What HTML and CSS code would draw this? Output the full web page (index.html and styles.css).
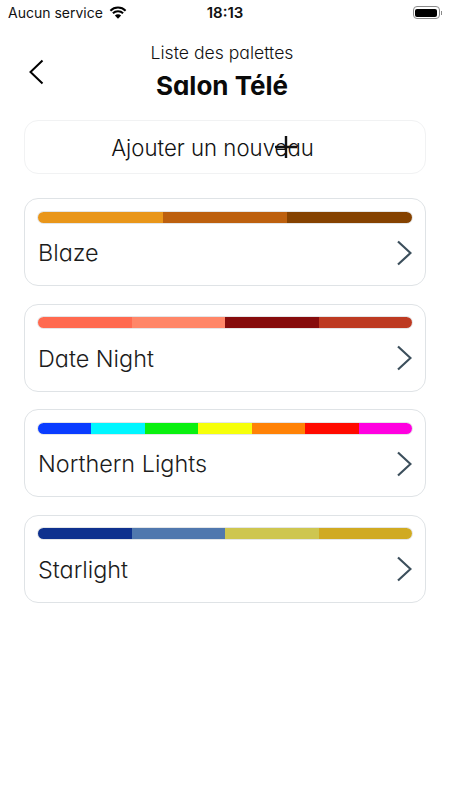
FILE: index.html
```html
<!DOCTYPE html>
<html lang="fr">
<head>
<meta charset="utf-8">
<title>Salon Télé</title>
<link rel="stylesheet" href="styles.css">
</head>
<body>
<div class="status">
  <div class="status-left">
    <span>Aucun service</span>
    <svg class="wifi" viewBox="0 0 18 13" width="18" height="13"><path d="M9 12.8 5.9 9.5a4.4 4.4 0 0 1 6.2 0z" fill="#000"/><path d="M1.4 4.7a10.8 10.8 0 0 1 15.2 0M3.9 7.3a7.2 7.2 0 0 1 10.2 0" fill="none" stroke="#000" stroke-width="2"/></svg>
  </div>
  <div class="status-time">18:13</div>
  <div class="status-right">
    <div class="battery"><div class="battery-fill"></div></div>
    <div class="battery-tip"></div>
  </div>
</div>
<header class="header">
  <button class="back" aria-label="Retour">
    <svg viewBox="0 0 16 26" width="16" height="26"><path d="M14.5 1.5 2.5 13l12 11.5" fill="none" stroke="#000" stroke-width="2"/></svg>
  </button>
  <div class="subtitle">Liste des palettes</div>
  <h1 class="title">Salon Télé</h1>
</header>
<main class="content">
  <div class="add">
    <span>Ajouter un nouveau</span>
    <svg class="plus" viewBox="0 0 22 22" width="22" height="22"><path d="M11 0v22M0 11h22" stroke="#111" stroke-width="2.4" fill="none"/></svg>
  </div>
  <div class="card">
    <div class="bar"><i class="c-e9961a"></i><i class="c-bd600e"></i><i class="c-854200"></i></div>
    <div class="row"><span>Blaze</span><svg class="chev" viewBox="0 0 15 26" width="15" height="26"><path d="M1 1.5 13.5 13 1 24.5" fill="none" stroke="#3c4f5c" stroke-width="2.2"/></svg></div>
  </div>
  <div class="card">
    <div class="bar"><i class="c-ff6a50"></i><i class="c-ff8668"></i><i class="c-860c0c"></i><i class="c-bd3a22"></i></div>
    <div class="row"><span>Date Night</span><svg class="chev" viewBox="0 0 15 26" width="15" height="26"><path d="M1 1.5 13.5 13 1 24.5" fill="none" stroke="#3c4f5c" stroke-width="2.2"/></svg></div>
  </div>
  <div class="card">
    <div class="bar"><i class="c-0a3cff"></i><i class="c-00f6ff"></i><i class="c-0af010"></i><i class="c-f6ff0a"></i><i class="c-ff8206"></i><i class="c-ff0a00"></i><i class="c-ff00e0"></i></div>
    <div class="row"><span>Northern Lights</span><svg class="chev" viewBox="0 0 15 26" width="15" height="26"><path d="M1 1.5 13.5 13 1 24.5" fill="none" stroke="#3c4f5c" stroke-width="2.2"/></svg></div>
  </div>
  <div class="card">
    <div class="bar"><i class="c-0e318e"></i><i class="c-5078ae"></i><i class="c-cec650"></i><i class="c-d0aa22"></i></div>
    <div class="row"><span>Starlight</span><svg class="chev" viewBox="0 0 15 26" width="15" height="26"><path d="M1 1.5 13.5 13 1 24.5" fill="none" stroke="#3c4f5c" stroke-width="2.2"/></svg></div>
  </div>
</main>
</body>
</html>
```
FILE: styles.css
```css
* { box-sizing: border-box; }
html, body { margin: 0; padding: 0; }
body { width: 450px; height: 800px; background: #fff; color: #111; font-family: "Inter", "Liberation Sans", sans-serif; font-feature-settings: "cv11"; overflow: hidden; }
.status { height: 25px; padding: 0 8px; display: grid; grid-template-columns: 1fr auto 1fr; align-items: center; font-family: "Inter", "Liberation Sans", sans-serif; font-size: 14px; color: #111; font-feature-settings: normal; }
.status-left { display: flex; align-items: center; gap: 6px; }
.wifi { display: block; }
.status-time { font-weight: 600; font-size: 15px; }
.status-right { display: flex; justify-content: flex-end; align-items: center; gap: 1px; }
.battery { width: 27px; height: 13px; border: 1px solid #8a8a8a; border-radius: 4px; padding: 1.5px; }
.battery-fill { width: 100%; height: 100%; background: #000; border-radius: 2px; }
.battery-tip { width: 1.5px; height: 4px; background: #8a8a8a; }
.header { position: relative; height: 95px; padding: 17px 6px 0 0; text-align: center; }
.back { position: absolute; left: 28px; top: 34px; padding: 0; border: 0; background: none; line-height: 0; }
.subtitle { font-size: 17.6px; font-weight: 300; line-height: 22px; color: #111; }
.title { margin: 6px 0 0; font-size: 26px; font-weight: 700; line-height: 32px; color: #0a0a0a; }
.content { padding: 0 24px; display: flex; flex-direction: column; }
.add { position: relative; height: 54px; border: 1px solid #f1f2f3; border-radius: 14px; display: flex; align-items: center; justify-content: center; font-size: 22.2px; font-weight: 300; color: #111; margin-bottom: 24px; padding-right: 25px; }
.plus { position: absolute; left: 250px; top: 15px; }
.card { height: 88px; border: 1.5px solid #dfe3e6; border-radius: 14px; padding: 12.5px 13px 0; margin-bottom: 17.5px; }
.bar { display: flex; height: 11px; border-radius: 6px; overflow: hidden; box-shadow: 0 0 0 1px #e4e6e8; }
.bar i { flex: 1; display: block; }
.row { display: flex; justify-content: space-between; align-items: center; margin-top: 15px; height: 30px; font-size: 23.4px; font-weight: 300; color: #1c1c1c; }
.chev { display: block; }
.c-e9961a { background: #e9961a; } .c-bd600e { background: #bd600e; } .c-854200 { background: #854200; }
.c-ff6a50 { background: #ff6a50; } .c-ff8668 { background: #ff8668; } .c-860c0c { background: #860c0c; } .c-bd3a22 { background: #bd3a22; }
.c-0a3cff { background: #0a3cff; } .c-00f6ff { background: #00f6ff; } .c-0af010 { background: #0af010; } .c-f6ff0a { background: #f6ff0a; } .c-ff8206 { background: #ff8206; } .c-ff0a00 { background: #ff0a00; } .c-ff00e0 { background: #ff00e0; }
.c-0e318e { background: #0e318e; } .c-5078ae { background: #5078ae; } .c-cec650 { background: #cec650; } .c-d0aa22 { background: #d0aa22; }
```
